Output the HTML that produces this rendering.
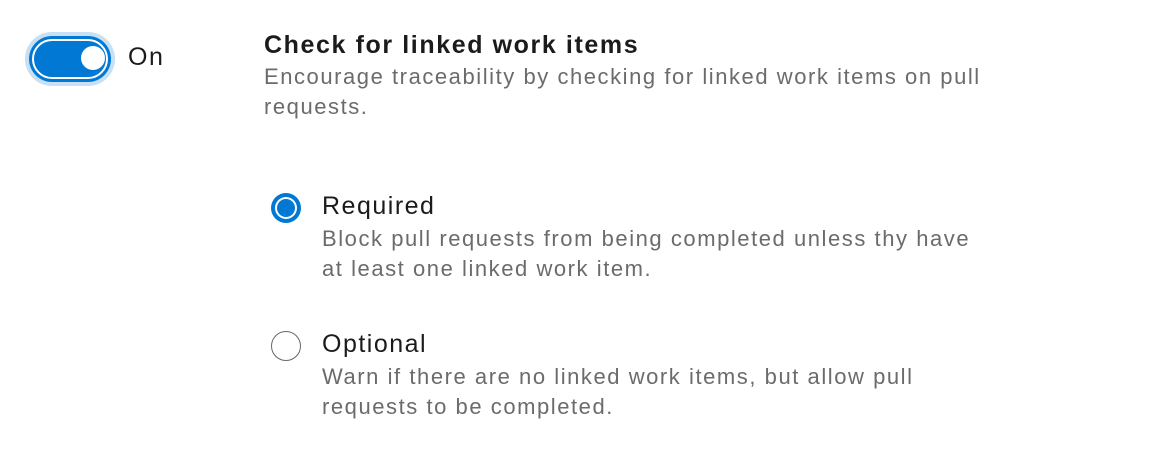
<!DOCTYPE html>
<html><head><style>
body{margin:0;width:1176px;height:460px;background:#fff;font-family:"Liberation Sans",sans-serif;position:relative;overflow:hidden}
.a{position:absolute;white-space:nowrap}
.t{font-size:25px;color:#1b1b1b;letter-spacing:1.5px}
.d{font-size:22px;color:#6b6b6b;line-height:30px;letter-spacing:1.55px}
.c{position:absolute;border-radius:50%;box-sizing:border-box}
</style></head><body>
<div class="a" style="left:25px;top:32px;width:90px;height:54px;border-radius:27px;background:#c7e0f4"></div>
<div class="a" style="left:29px;top:36px;width:82px;height:46px;border-radius:23px;background:#0078d4"></div>
<div class="a" style="left:32px;top:39px;border-radius:20px;border:2px solid #fff;width:72px;height:36px"></div>
<div class="a" style="left:81px;top:46px;width:24px;height:24px;border-radius:50%;background:#fff"></div>
<div class="a t" style="left:128px;top:43px;">On</div>
<div class="a t" style="left:264px;top:31px;font-weight:bold;letter-spacing:1.6px">Check for linked work items</div>
<div class="a d" style="left:264px;top:62px;">Encourage traceability by checking for linked work items on pull<br>requests.</div>
<div class="c" style="left:271px;top:193px;width:30px;height:30px;background:#0078d4"></div>
<div class="c" style="left:275px;top:197px;width:22px;height:22px;background:#fff"></div>
<div class="c" style="left:277px;top:199px;width:18px;height:18px;background:#0078d4"></div>
<div class="a t" style="left:322px;top:192px;">Required</div>
<div class="a d" style="left:322px;top:224px;">Block pull requests from being completed unless thy have<br>at least one linked work item.</div>
<div class="c" style="left:271px;top:331px;width:30px;height:30px;border:1.5px solid #666"></div>
<div class="a t" style="left:322px;top:330px;">Optional</div>
<div class="a d" style="left:322px;top:362px;">Warn if there are no linked work items, but allow pull<br>requests to be completed.</div>
</body></html>
